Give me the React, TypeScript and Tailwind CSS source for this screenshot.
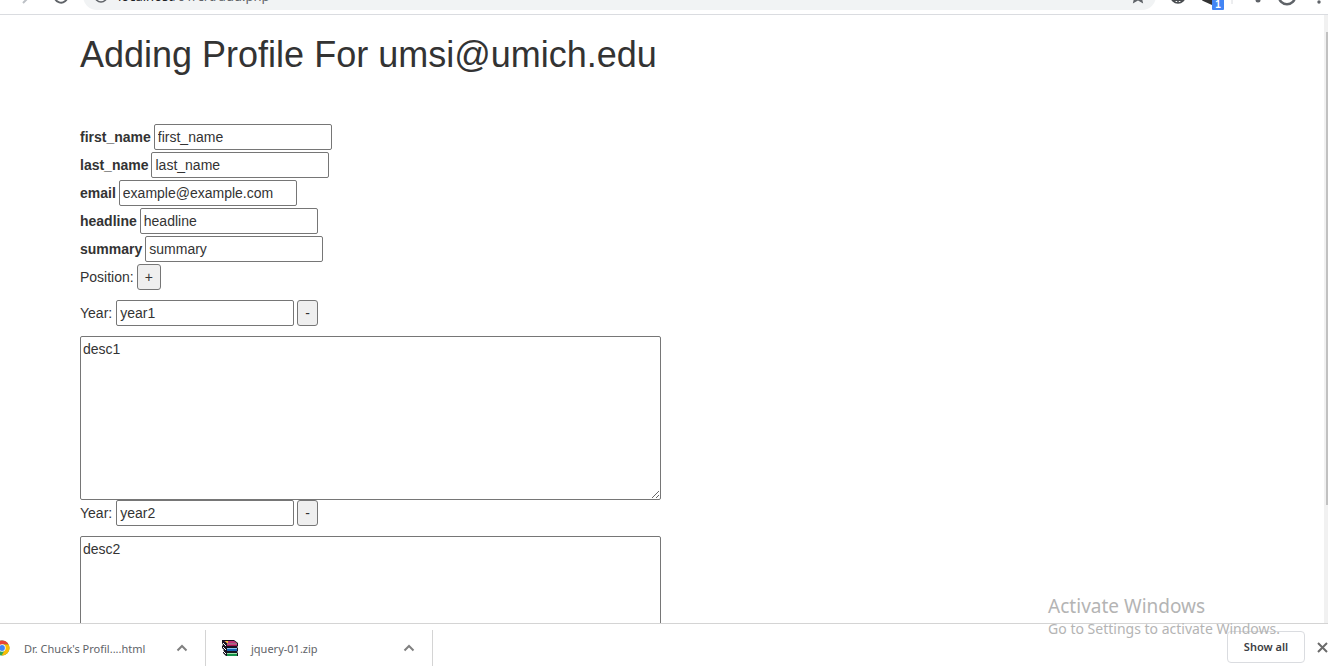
import React from "react";

const fields = [
  { name: "first_name", value: "first_name" },
  { name: "last_name", value: "last_name" },
  { name: "email", value: "example@example.com" },
  { name: "headline", value: "headline" },
  { name: "summary", value: "summary" },
];

const boxClass =
  "h-[26px] w-[178px] rounded-[2px] border border-[#767676] bg-white px-[3px] text-sm text-[#333]";
const buttonClass =
  "h-[26px] rounded-[3px] border border-[#767676] bg-[#efefef] px-[7px] text-sm leading-5 text-[#333]";

function Toolbar() {
  return (
    <header className="relative flex h-[15px] shrink-0 items-end overflow-hidden border-b border-[#dadce0] bg-white">
      <div className="mb-1 flex h-7 w-full items-center">
        <div className="flex w-[83px] shrink-0 items-center justify-end gap-[22px] pr-[14px]">
          <svg width="14" height="16" viewBox="0 0 14 16" fill="none" stroke="#bdc1c6" strokeWidth="2" aria-hidden="true">
            <path d="M0 8h12M6 1l7 7-7 7" />
          </svg>
          <svg width="16" height="16" viewBox="0 0 16 16" fill="none" stroke="#5f6368" strokeWidth="2" aria-hidden="true">
            <path d="M13 4a6.5 6.5 0 1 0 1.5 4M14 0v5H9" />
          </svg>
        </div>
        <div className="flex h-7 grow items-center rounded-full bg-[#f1f3f4] pr-[10px] pl-[11px]">
          <svg width="14" height="14" viewBox="0 0 14 14" fill="none" stroke="#5f6368" strokeWidth="1.5" aria-hidden="true">
            <circle cx="7" cy="7" r="6" />
            <path d="M7 6v4M7 3.5v1" />
          </svg>
          <span className="pl-[10px] font-['Noto_Sans',sans-serif] text-[13px] leading-5 text-[#5f6368]">
            <span className="text-[#202124]">localhost</span>/01/crt/add.php
          </span>
          <svg className="ml-auto" width="16" height="16" viewBox="0 0 24 24" fill="none" stroke="#5f6368" strokeWidth="2.5" aria-hidden="true">
            <path d="m12 3 2.7 6.2 6.7.6-5 4.4 1.5 6.6-5.9-3.5-5.9 3.5 1.5-6.6-5-4.4 6.7-.6z" />
          </svg>
        </div>
        <div className="flex w-[172px] shrink-0 items-center pl-[14px]">
          <svg width="16" height="18" viewBox="0 0 16 18" fill="none" stroke="#4a4d51" strokeWidth="1.6" aria-hidden="true">
            <circle cx="8" cy="9" r="7" />
            <path d="M1 9h14M2 13.2h12M8 2v14M4.6 3v12M11.4 3v12" />
          </svg>
          <svg className="ml-[14px]" width="14" height="18" viewBox="0 0 14 18" fill="#333" aria-hidden="true">
            <path d="M2 13.5 12 4v14z" />
          </svg>
          <svg className="ml-[17px]" width="2" height="16" viewBox="0 0 2 16" aria-hidden="true">
            <path d="M1 0v16" stroke="#dadce0" />
          </svg>
          <svg className="ml-[19px]" width="12" height="14" viewBox="0 0 12 14" fill="#5f6368" aria-hidden="true">
            <circle cx="6" cy="11" r="2.5" />
            <path d="M5 0h2v11H5z" />
          </svg>
          <svg className="ml-[13px]" width="20" height="20" viewBox="0 0 20 20" fill="none" stroke="#5f6368" strokeWidth="2.5" aria-hidden="true">
            <circle cx="10" cy="10" r="8.2" />
          </svg>
          <svg className="ml-[20px]" width="4" height="16" viewBox="0 0 4 16" fill="#5f6368" aria-hidden="true">
            <circle cx="2" cy="2" r="1.7" />
            <circle cx="2" cy="8" r="1.7" />
            <circle cx="2" cy="14" r="1.7" />
          </svg>
        </div>
      </div>
      <span className="absolute right-[104px] bottom-1 h-[10px] w-3 rounded-b-[1px] bg-[#4285f4] text-center text-[10px] leading-[10px] font-bold text-white">
        1
      </span>
    </header>
  );
}

function Position({ index }: { index: number }) {
  return (
    <section>
      <div className="mb-[10px] flex items-center">
        <label htmlFor={"year" + index} className="mr-1">
          Year:
        </label>
        <input id={"year" + index} defaultValue={"year" + index} className={boxClass} />
        <button type="button" className={buttonClass + " ml-[3px]"}>
          -
        </button>
      </div>
      <textarea
        aria-label={"Description " + index}
        rows={8}
        cols={80}
        defaultValue={"desc" + index}
        className="block h-[164px] w-[581px] resize rounded-[2px] border border-[#767676] bg-white p-[2px] text-sm leading-5 text-[#333]"
      />
    </section>
  );
}

function Chevron() {
  return (
    <svg width="12" height="8" viewBox="0 0 12 8" fill="none" stroke="#808080" strokeWidth="2" aria-hidden="true">
      <path d="m1.5 6.5 4.5-4.5 4.5 4.5" />
    </svg>
  );
}

function ChromeIcon() {
  return (
    <svg className="-ml-[6px] shrink-0" width="16" height="16" viewBox="0 0 16 16" aria-hidden="true">
      <circle cx="8" cy="8" r="7.5" fill="#34a853" />
      <path d="M1.5 4.2A7.5 7.5 0 0 1 14.6 4.5H8L4.8 9.8z" fill="#ea4335" />
      <path d="M8 4.5h6.6A7.5 7.5 0 0 1 7.6 15.5L11 9.8z" fill="#fbbc05" />
      <circle cx="8" cy="8" r="3.7" fill="#fff" />
      <circle cx="8" cy="8" r="2.9" fill="#4285f4" />
    </svg>
  );
}

function ArchiveIcon() {
  return (
    <svg width="17" height="17" viewBox="0 0 17 17" aria-hidden="true">
      <path d="M0 0h12l4 3v3l-1 1 1 1v3l-1 1 1 1v3H4l-3-3v-2l1-1-2-2v-2l1-1-1-2z" fill="#171321" />
      <path d="M2 1h10l3 2H5z" fill="#c2337a" />
      <path d="M5 4h10v2H5z" fill="#a31352" />
      <path d="M5 3.4h10v1H5z" fill="#f0a8c4" />
      <path d="M5 8h10v1H5z" fill="#8cc8f2" />
      <path d="M5 9h10v2H5z" fill="#1764b5" />
      <path d="M5 13h10v1H5z" fill="#9fe3ab" />
      <path d="M5 14h10v2H5z" fill="#16934a" />
      <path d="m1 3 3 3M1 7l3 3M1 11l3 3" stroke="#fff" />
      <path d="M3 1h3v2H5z" fill="#f3c835" />
    </svg>
  );
}

function DownloadBar() {
  return (
    <footer className="flex h-[43px] shrink-0 items-center border-t border-[#d4d4d4] bg-white font-['Noto_Sans',sans-serif] text-[11px] text-[#5f6368]">
      <div className="mt-[6px] flex h-9 w-[205px] shrink-0 items-center">
        <ChromeIcon />
        <a href="#profile" className="mt-[2px] ml-[14px]">
          Dr. Chuck's Profil....html
        </a>
        <button type="button" aria-label="Profile download options" className="mr-[17px] ml-auto">
          <Chevron />
        </button>
      </div>
      <div className="mt-[6px] flex h-9 w-[228px] shrink-0 items-center border-x border-[#d4d4d4] pl-4">
        <ArchiveIcon />
        <a href="#jquery" className="mt-[2px] ml-3">
          jquery-01.zip
        </a>
        <button type="button" aria-label="Archive download options" className="mr-[17px] ml-auto">
          <Chevron />
        </button>
      </div>
      <button
        type="button"
        className="mt-1 ml-auto h-8 w-[78px] rounded-[4px] border border-[#dadce0] bg-white font-semibold text-[#3c4043]"
      >
        Show all
      </button>
      <button type="button" aria-label="Close downloads" className="mt-1 ml-3">
        <svg width="11" height="11" viewBox="0 0 11 11" fill="none" stroke="#6b6b6b" strokeWidth="2" aria-hidden="true">
          <path d="m1 1 9 9M10 1l-9 9" />
        </svg>
      </button>
    </footer>
  );
}

export default function App() {
  return (
    <div className="relative flex h-screen flex-col overflow-hidden bg-white font-['Liberation_Sans',Arial,sans-serif] text-sm leading-5 text-[#333]">
      <Toolbar />
      <div className="flex min-h-0 grow">
        <main className="grow overflow-hidden pl-20">
          <h1 className="mt-5 mb-[49px] text-4xl leading-10">Adding Profile For umsi@umich.edu</h1>
          <form>
            <div className="flex flex-col gap-[2px]">
              {fields.map((field) => (
                <div key={field.name} className="flex items-center">
                  <label htmlFor={field.name} className="mr-[3px] font-bold">
                    {field.name}
                  </label>
                  <input id={field.name} defaultValue={field.value} className={boxClass} />
                </div>
              ))}
              <div className="mb-[10px] flex items-center">
                <span className="mr-[3px]">Position:</span>
                <button type="button" className={buttonClass}>
                  +
                </button>
              </div>
            </div>
            <Position index={1} />
            <Position index={2} />
          </form>
        </main>
        <div className="w-1 shrink-0 bg-[#f1f1f1] pt-[17px] pl-[2px]" aria-hidden="true">
          <div className="h-4/5 bg-[#c1c1c1]" />
        </div>
      </div>
      <DownloadBar />
      <aside className="pointer-events-none absolute right-12 bottom-[26px] font-['Noto_Sans',sans-serif] text-[#b4b4b4]">
        <p className="text-[19px] leading-6">Activate Windows</p>
        <p className="text-sm leading-[22px]">Go to Settings to activate Windows.</p>
      </aside>
    </div>
  );
}
